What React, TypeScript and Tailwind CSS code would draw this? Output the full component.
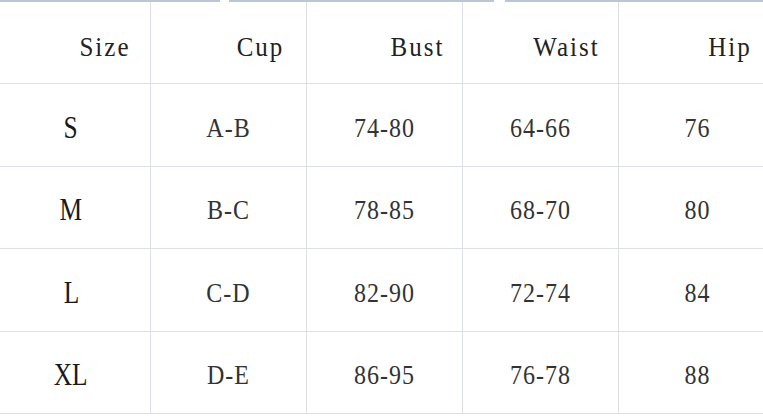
const headers = [
  { label: "Size", pad: "pl-[60px]" },
  { label: "Cup", pad: "pl-[64px]" },
  { label: "Bust", pad: "pl-[66px]" },
  { label: "Waist", pad: "pl-[52px]" },
  { label: "Hip", pad: "pl-[78px]" },
];

const rows = [
  ["S", "A-B", "74-80", "64-66", "76"],
  ["M", "B-C", "78-85", "68-70", "80"],
  ["L", "C-D", "82-90", "72-74", "84"],
  ["XL", "D-E", "86-95", "76-78", "88"],
];

export default function App() {
  return (
    <div className="w-[763px] h-[418px] bg-white overflow-hidden">
      {/* top edge of the cropped chart */}
      <div className="flex h-[2px]">
        <div className="w-[220px] bg-[#bcc6d2]"></div>
        <div className="w-[9px] bg-white"></div>
        <div className="w-[265px] bg-[#bcc6d2]"></div>
        <div className="w-[11px] bg-white"></div>
        <div className="flex-1 bg-[#bcc6d2]"></div>
      </div>

      <div className="grid grid-cols-[151px_156px_156px_156px_1fr]">
        {headers.map((h, i) => (
          <div
            key={h.label}
            className={`h-[82px] flex items-center justify-center pt-2 border-b border-[#dcdfe3] ${h.pad} ${
              i < 4 ? "border-r" : ""
            }`}
          >
            <span className="font-['Liberation_Serif',serif] text-[25px] tracking-[2px] text-[#222] scale-y-[1.1] inline-block">
              {h.label}
            </span>
          </div>
        ))}

        {rows.map((row) =>
          row.map((cell, i) => (
            <div
              key={row[0] + i}
              className={`h-[82.5px] flex items-center justify-center pt-1.5 border-b border-[#dcdfe3] ${
                i < 4 ? "border-r" : ""
              } ${i === 0 ? "pr-2" : ""} ${i === 4 ? "pl-[13px]" : ""}`}
            >
              {i === 0 ? (
                <span className="font-['Liberation_Serif',serif] text-[31px] text-[#1a1a1a] scale-x-[0.82] inline-block">
                  {cell}
                </span>
              ) : (
                <span className="font-['Liberation_Serif',serif] text-[24px] tracking-[1px] text-[#333] scale-y-[1.1] inline-block">
                  {cell}
                </span>
              )}
            </div>
          ))
        )}
      </div>
    </div>
  );
}
